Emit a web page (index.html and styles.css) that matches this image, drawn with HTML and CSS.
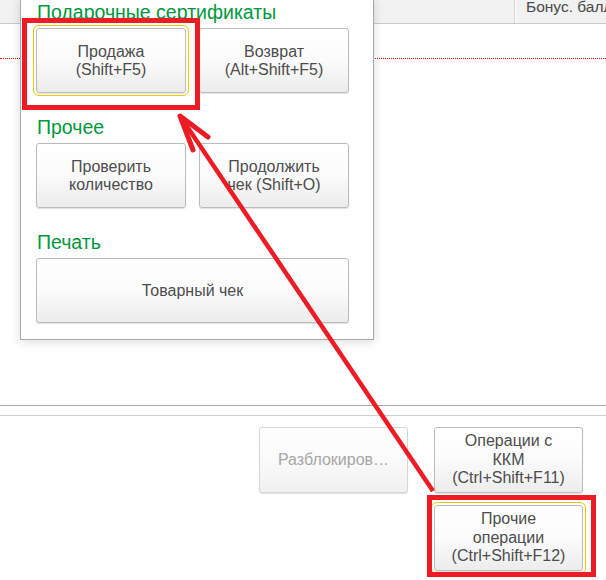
FILE: index.html
```html
<!DOCTYPE html>
<html lang="ru">
<head>
<meta charset="utf-8">
<title>Прочие операции</title>
<link rel="stylesheet" href="styles.css">
</head>
<body>
<div class="page">
  <div class="header">
    <div class="header-cell header-cell--first"></div>
    <div class="header-cell header-cell--bonus">Бонус. баллы</div>
  </div>
  <div class="dotted"></div>
  <div class="spacer"></div>
  <div class="sep sep--dark"></div>
  <div class="sep sep--light"></div>
  <div class="actions">
    <div class="actions-row">
      <button class="btn btn--disabled">Разблокиров…</button>
      <button class="btn">Операции с<br>ККМ<br>(Ctrl+Shift+F11)</button>
    </div>
    <div class="actions-row">
      <button class="btn btn--focus">Прочие<br>операции<br>(Ctrl+Shift+F12)</button>
    </div>
  </div>
</div>

<div class="popup">
  <div class="group-title group-title--first">Подарочные сертификаты</div>
  <div class="btn-grid">
    <button class="btn btn--focus">Продажа<br>(Shift+F5)</button>
    <button class="btn">Возврат<br>(Alt+Shift+F5)</button>
  </div>
  <div class="group-title">Прочее</div>
  <div class="btn-grid">
    <button class="btn">Проверить<br>количество</button>
    <button class="btn">Продолжить<br>чек (Shift+O)</button>
  </div>
  <div class="group-title">Печать</div>
  <div class="btn-grid">
    <button class="btn btn--wide">Товарный чек</button>
  </div>
</div>

<svg class="annotations" width="606" height="580" viewBox="0 0 606 580">
  <rect x="24.5" y="20.5" width="173" height="87" fill="none" stroke="#ed1c24" stroke-width="5"/>
  <rect x="429.5" y="497.5" width="164" height="77" fill="none" stroke="#ed1c24" stroke-width="5"/>
  <line x1="433" y1="491" x2="182" y2="119" stroke="#ed1c24" stroke-width="4.5"/>
  <polyline points="193,150 180,116 208,137" fill="none" stroke="#ed1c24" stroke-width="5" stroke-linejoin="round" stroke-linecap="round"/>
</svg>
</body>
</html>
```

FILE: styles.css
```css
* { box-sizing: border-box; }

html, body {
  margin: 0;
  padding: 0;
  background: #ffffff;
}

body {
  width: 606px;
  height: 580px;
  overflow: hidden;
  position: relative;
  font-family: "Liberation Sans", Arial, sans-serif;
  font-size: 15px;
  color: #4d4d4d;
}

.page {
  display: flex;
  flex-direction: column;
  height: 580px;
}

.header {
  display: flex;
  height: 24px;
  background: #f2f2f2;
  border-bottom: 1px solid #c9c9c9;
}

.header-cell--first {
  width: 515px;
  border-right: 1px solid #d2d2d2;
  box-shadow: 1px 0 0 #ffffff;
}

.header-cell--bonus {
  flex: 1;
  padding-left: 11px;
  font-size: 15.5px;
  line-height: 14px;
  white-space: nowrap;
  overflow: hidden;
  color: #4a4a4a;
}

.dotted {
  margin-top: 34px;
  height: 0;
  border-top: 1px dotted #e01010;
}

.spacer {
  height: 346px;
}

.sep {
  height: 1px;
}

.sep--dark {
  background: #a9a9a9;
}

.sep--light {
  margin-top: 9px;
  background: #d0d0d0;
}

.actions {
  display: flex;
  flex-direction: column;
  align-items: flex-end;
  gap: 12px;
  padding-top: 11px;
  padding-right: 23px;
}

.actions-row {
  display: flex;
  gap: 26px;
}

.btn {
  width: 149px;
  height: 66px;
  padding: 0 3px;
  border: 1px solid #bcbcbc;
  border-radius: 3px;
  background: linear-gradient(to bottom, #ffffff 0%, #fbfbfb 50%, #ececec 100%);
  box-shadow: 0 1px 1px rgba(0, 0, 0, 0.12);
  font-family: "Liberation Sans", Arial, sans-serif;
  font-size: 16px;
  line-height: 18.5px;
  color: #4d4d4d;
  text-align: center;
}

.btn--disabled {
  color: #a6a6a6;
  border-color: #d6d6d6;
  background: linear-gradient(to bottom, #ffffff 0%, #fafafa 50%, #f0f0f0 100%);
}

.btn--focus {
  outline: 1px solid #f4c400;
  outline-offset: 2px;
}

.popup {
  position: absolute;
  left: 20px;
  top: -2px;
  width: 354px;
  padding: 2px 24px 16px 15px;
  background: #ffffff;
  border: 1px solid #a9a9a9;
  box-shadow: 0 2px 10px rgba(0, 0, 0, 0.14);
}

.group-title {
  margin-top: 23px;
  margin-bottom: 5px;
  padding-left: 1px;
  font-size: 19.5px;
  line-height: 22px;
  color: #00973d;
}

.group-title--first {
  margin-top: 0;
}

.btn-grid {
  display: grid;
  grid-template-columns: 150px 150px;
  column-gap: 13px;
}

.btn-grid .btn {
  width: 150px;
  height: 65px;
  line-height: 18px;
}

.btn-grid .btn--wide {
  grid-column: 1 / 3;
  width: 313px;
}

.annotations {
  position: absolute;
  left: 0;
  top: 0;
  pointer-events: none;
}
```
